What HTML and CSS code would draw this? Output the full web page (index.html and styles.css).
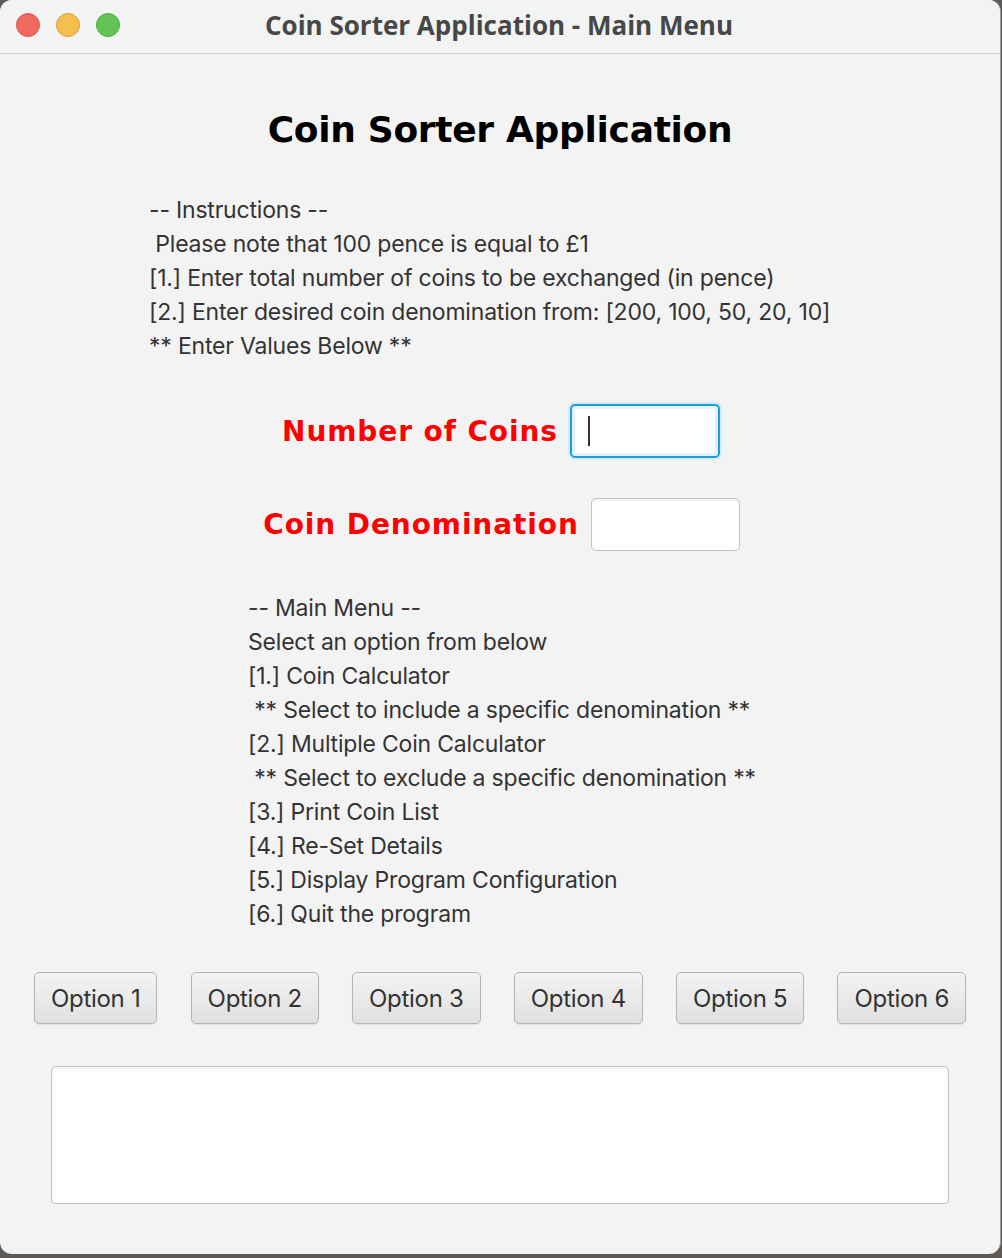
FILE: index.html
```html
<!DOCTYPE html>
<html>
<head>
<meta charset="utf-8">
<link rel="stylesheet" href="styles.css">
</head>
<body>
<div class="window">
  <div class="titlebar">
    <div class="lights">
      <span class="light red"></span>
      <span class="light yellow"></span>
      <span class="light green"></span>
    </div>
    <div class="title">Coin Sorter Application - Main Menu</div>
  </div>
  <div class="content">
    <h1 class="heading">Coin Sorter Application</h1>
    <div class="text-block instructions">
      <div>-- Instructions --</div>
      <div>&nbsp;Please note that 100 pence is equal to £1</div>
      <div>[1.] Enter total number of coins to be exchanged (in pence)</div>
      <div>[2.] Enter desired coin denomination from: [200, 100, 50, 20, 10]</div>
      <div>** Enter Values Below **</div>
    </div>
    <div class="field-row row1">
      <label class="field-label">Number of Coins</label>
      <div class="field focused"><span class="caret"></span></div>
    </div>
    <div class="field-row row2">
      <label class="field-label">Coin Denomination</label>
      <div class="field"></div>
    </div>
    <div class="text-block menu">
      <div>-- Main Menu --</div>
      <div>Select an option from below</div>
      <div>[1.] Coin Calculator</div>
      <div>&nbsp;** Select to include a specific denomination **</div>
      <div>[2.] Multiple Coin Calculator</div>
      <div>&nbsp;** Select to exclude a specific denomination **</div>
      <div>[3.] Print Coin List</div>
      <div>[4.] Re-Set Details</div>
      <div>[5.] Display Program Configuration</div>
      <div>[6.] Quit the program</div>
    </div>
    <div class="buttons">
      <button class="btn">Option 1</button>
      <button class="btn">Option 2</button>
      <button class="btn">Option 3</button>
      <button class="btn">Option 4</button>
      <button class="btn">Option 5</button>
      <button class="btn">Option 6</button>
    </div>
    <div class="output"></div>
  </div>
</div>
</body>
</html>
```

FILE: styles.css
```css
html, body {
  margin: 0;
  padding: 0;
}
body {
  width: 1002px;
  height: 1258px;
  background: #5e5a58;
  overflow: hidden;
}
.window {
  width: 1000px;
  height: 1254px;
  background: #f3f3f3;
  border-radius: 12px;
  overflow: hidden;
  border-right: 1px solid #9a9a9a;
  display: flex;
  flex-direction: column;
}
.titlebar {
  height: 53px;
  flex: none;
  background: #f2f3f3;
  border-bottom: 1px solid #d0d0d0;
  position: relative;
  display: flex;
  align-items: center;
  justify-content: center;
}
.lights {
  position: absolute;
  left: 16px;
  top: 13px;
  display: flex;
  gap: 16px;
}
.light {
  width: 24px;
  height: 24px;
  border-radius: 50%;
  box-sizing: border-box;
}
.red { background: #ee6a5f; border: 1px solid #d9574d; }
.yellow { background: #f5bf4f; border: 1px solid #dca23c; }
.green { background: #61c454; border: 1px solid #4ea840; }
.title {
  font-family: "Open Sans", "Liberation Sans", sans-serif;
  font-weight: 700;
  font-size: 26px;
  color: #474747;
  margin-left: -2px;
  margin-top: -4px;
}
.content {
  flex: 1;
  display: flex;
  flex-direction: column;
  align-items: stretch;
}
.heading {
  margin: 0;
  padding-top: 54px;
  text-align: center;
  font-family: "DejaVu Sans", Verdana, sans-serif;
  font-weight: 700;
  font-size: 36px;
  line-height: 44px;
  color: #000;
  letter-spacing: -0.3px;
}
.text-block {
  font-family: Inter, "Noto Sans", sans-serif;
  font-size: 23px;
  line-height: 34px;
  color: #333;
  letter-spacing: -0.2px;
}
.instructions {
  margin-top: 41px;
  padding-left: 149px;
}
.field-row {
  display: flex;
  justify-content: center;
  align-items: center;
  gap: 12px;
}
.row1 { margin-top: 41px; padding-left: 2px; }
.row2 { margin-top: 40px; padding-left: 3px; }
.field-label {
  font-family: "DejaVu Sans", Verdana, sans-serif;
  font-weight: 700;
  font-size: 28px;
  color: #ff0000;
  letter-spacing: 0.9px;
}
.field {
  width: 147px;
  height: 51px;
  background: #fff;
  border: 1px solid #c3c3c3;
  border-radius: 5px;
  box-shadow: inset 0 2px 2px rgba(0,0,0,0.06);
  display: flex;
  align-items: center;
}
.field.focused {
  width: 146px;
  height: 50px;
  border: 2px solid #1a9fdc;
  box-shadow: 0 0 0 2px #d6ebf5, inset 0 0 0 3px #e4f1f8;
}
.caret {
  width: 2px;
  height: 30px;
  background: #333;
  margin-left: 16px;
}
.menu {
  margin-top: 40px;
  padding-left: 248px;
}
.buttons {
  margin-top: 41px;
  display: flex;
  justify-content: space-between;
  padding: 0 34px 0 34px;
}
.btn {
  height: 52px;
  padding: 0 16px;
  font-family: Inter, "Noto Sans", sans-serif;
  font-size: 24px;
  letter-spacing: -0.3px;
  color: #333;
  background: linear-gradient(#f3f3f3, #e0e0e0);
  border: 1px solid #b4b4b4;
  border-radius: 5px;
  box-shadow: 0 1px 1px rgba(0,0,0,0.08);
}
.output {
  margin: 42px 51px 0 51px;
  height: 136px;
  background: #fff;
  border: 1px solid #c4c4c4;
  border-radius: 4px;
  box-shadow: inset 0 3px 3px rgba(0,0,0,0.05);
}
```
